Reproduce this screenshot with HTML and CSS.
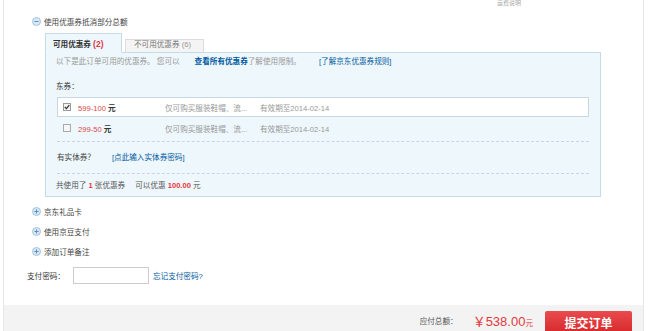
FILE: index.html
```html
<!DOCTYPE html>
<html lang="zh-CN">
<head>
  <meta charset="UTF-8" />
  <title>填写并核对订单信息</title>
  <link rel="stylesheet" href="styles.css">
</head>
<body>
  <div class="frame">
    <div class="top-note"><span>运费说明</span></div>

    <div class="order-opts">
      <div class="toggle first">
        <svg class="ico" viewBox="0 0 9 9" width="9" height="9"><circle cx="4.5" cy="4.5" r="4" fill="#d9e9f5" stroke="#a3c4df"/><path d="M2.4 4.5h4.2" stroke="#5a8fc3"/></svg>
        <span>使用优惠券抵消部分总额</span>
      </div>

      <div class="coupons">
        <div class="tabs">
          <div class="tab active">可用优惠券 <em>(2)</em></div>
          <div class="tab">不可用优惠券 <em>(6)</em></div>
        </div>
        <div class="panel">
          <p class="intro">以下是此订单可用的优惠券。 您可以<a class="strong" href="#">查看所有优惠券</a>了解使用限制。<a class="rule" href="#">[了解京东优惠券规则]</a></p>
          <h4 class="group">东券：</h4>
          <ul class="coupon-list">
            <li class="coupon selected">
              <svg class="chk" viewBox="0 0 8 8" width="8" height="8"><rect x=".5" y=".5" width="7" height="7" fill="#f3f3f3" stroke="#9a9a9a"/><path d="M1.8 4l1.6 1.6L6.3 2.2" fill="none" stroke="#333" stroke-width="1.3"/></svg>
              <span class="c-value"><b>599-100</b> 元</span>
              <span class="c-desc">仅可购买服装鞋帽、流...</span>
              <span class="c-date">有效期至2014-02-14</span>
            </li>
            <li class="coupon">
              <svg class="chk" viewBox="0 0 8 8" width="8" height="8"><rect x=".5" y=".5" width="7" height="7" fill="#f6f6f6" stroke="#aaa"/></svg>
              <span class="c-value"><b>299-50</b> 元</span>
              <span class="c-desc">仅可购买服装鞋帽、流...</span>
              <span class="c-date">有效期至2014-02-14</span>
            </li>
          </ul>
          <div class="entity">有实体券？<a href="#">[点此输入实体券密码]</a></div>
          <div class="summary">共使用了 <em>1</em> 张优惠券<span class="sp"></span>可以优惠 <em>100.00</em> 元</div>
        </div>
      </div>

      <div class="toggle">
        <svg class="ico" viewBox="0 0 9 9" width="9" height="9"><circle cx="4.5" cy="4.5" r="4" fill="#d9e9f5" stroke="#a3c4df"/><path d="M2.4 4.5h4.2M4.5 2.4v4.2" stroke="#5a8fc3"/></svg>
        <span>京东礼品卡</span>
      </div>
      <div class="toggle">
        <svg class="ico" viewBox="0 0 9 9" width="9" height="9"><circle cx="4.5" cy="4.5" r="4" fill="#d9e9f5" stroke="#a3c4df"/><path d="M2.4 4.5h4.2M4.5 2.4v4.2" stroke="#5a8fc3"/></svg>
        <span>使用京豆支付</span>
      </div>
      <div class="toggle">
        <svg class="ico" viewBox="0 0 9 9" width="9" height="9"><circle cx="4.5" cy="4.5" r="4" fill="#d9e9f5" stroke="#a3c4df"/><path d="M2.4 4.5h4.2M4.5 2.4v4.2" stroke="#5a8fc3"/></svg>
        <span>添加订单备注</span>
      </div>

      <div class="paypwd">
        <label for="pwd">支付密码：</label>
        <input id="pwd" type="password" />
        <a href="#">忘记支付密码?</a>
      </div>
    </div>

    <div class="checkout-bar">
      <span class="total-label">应付总额：</span>
      <span class="total"><b>￥538.00</b>元</span>
      <button class="submit">提交订单</button>
    </div>
  </div>
</body>
</html>
```

FILE: styles.css
```css
:root {
  --red: #e4393c;
  --blue: #005aa0;
  --line: #c6dbe9;
  --panel: #eef7fc;
}

* {
  box-sizing: border-box;
}

body {
  margin: 0;
  font-family: "Liberation Sans", "Noto Sans CJK SC", sans-serif;
  font-size: 7.6px;
  color: #333;
  background: #fff;
  overflow: hidden;
}

a {
  color: var(--blue);
  text-decoration: none;
}

em {
  font-style: normal;
}

.frame {
  margin-left: 3px;
  width: 641px;
  height: 331px;
  border-left: 1px solid #e6e6e6;
  border-right: 1px solid #e6e6e6;
  display: flex;
  flex-direction: column;
}

.top-note {
  height: 7px;
  padding-left: 493px;
  color: #aaa;
}

.top-note span {
  display: block;
  font-size: 6px;
  line-height: 7px;
}

.order-opts {
  padding: 7px 0 0 28px;
}

.toggle {
  display: flex;
  align-items: center;
  gap: 3px;
  height: 20px;
  color: #444;
}

.toggle.first {
  height: 14px;
}

.ico {
  flex-shrink: 0;
}

/* coupons */
.coupons {
  margin: 5px 0 0 13px;
  width: 556px;
}

.tabs {
  display: flex;
  align-items: flex-end;
  gap: 3px;
  height: 20px;
  margin-bottom: -1px;
  position: relative;
}

.tab {
  border: 1px solid #dcdcdc;
  border-bottom: 1px solid var(--line);
  background: #f4f4f4;
  color: #777;
  width: 79px;
  height: 14px;
  line-height: 10px;
  padding-left: 8px;
}

.tab em {
  color: #999;
}

.tab.active {
  width: 77px;
  height: 20px;
  border-color: var(--line);
  border-bottom-color: var(--panel);
  background: var(--panel);
  color: #333;
  font-weight: bold;
  line-height: 12px;
  padding: 4px 0 0 7px;
}

.tab.active em {
  color: var(--red);
  font-size: 8.5px;
}

.panel {
  border: 1px solid var(--line);
  background: var(--panel);
  padding: 3px 11px 0 10px;
}

.intro {
  margin: 0;
  line-height: 12px;
  color: #999;
}

.intro .strong {
  font-weight: bold;
  margin-left: 15px;
}

.intro .rule {
  margin-left: 18px;
}

.group {
  margin: 13px 0 0;
  line-height: 12px;
  font-size: 7.6px;
  font-weight: normal;
  color: #333;
}

.coupon-list {
  list-style: none;
  margin: 4px 0 0 1px;
  padding: 0;
}

.coupon {
  display: flex;
  align-items: center;
  height: 20px;
  margin-bottom: 1px;
  padding-left: 5px;
  border: 1px solid transparent;
}

.coupon.selected {
  background: #fff;
  border-color: #c8d7e2;
}

.chk {
  margin-right: 7px;
  flex-shrink: 0;
}

.c-value {
  width: 87px;
  font-weight: bold;
  color: #333;
}

.c-value b {
  color: #d9474a;
  font-weight: normal;
}

.c-desc {
  width: 95px;
  color: #999;
}

.c-date {
  color: #999;
}

.entity {
  margin: 3px 0 0 1px;
  padding: 10px 0 9px;
  line-height: 12px;
  border-top: 1px dashed #c9d6df;
  border-bottom: 1px dashed #c9d6df;
  color: #444;
}

.entity a {
  margin-left: 17px;
}

.summary {
  padding: 6px 0 4px;
  line-height: 12px;
  color: #555;
}

.summary em {
  font-weight: bold;
  color: var(--red);
}

.summary .sp {
  display: inline-block;
  width: 10px;
}

/* more options */
.coupons + .toggle {
  margin-top: 4px;
}

.paypwd {
  display: flex;
  align-items: center;
  height: 17px;
  margin: 6px 0 0 -5px;
}

.paypwd label {
  color: #333;
  margin-right: 8px;
}

.paypwd input {
  width: 76px;
  height: 17px;
  border: 1px solid #ccc;
  margin: 0 4px 0 0;
  padding: 0;
}

/* checkout */
.checkout-bar {
  margin-top: auto;
  height: 26px;
  flex-shrink: 0;
  overflow: hidden;
  background: #f3f3f3;
  display: flex;
  justify-content: flex-end;
  align-items: flex-start;
  padding: 6px 11px 0 0;
  line-height: 22px;
}

.total-label {
  color: #555;
}

.total {
  margin-left: 15px;
  color: var(--red);
}

.total b {
  font-weight: normal;
  font-size: 13px;
}

.submit {
  margin-left: 12px;
  width: 87px;
  height: 22px;
  border: 0;
  border-radius: 2px;
  background: linear-gradient(#ea4b4e, #d6292c);
  color: #fff;
  font-family: "Noto Sans CJK SC", sans-serif;
  font-size: 12px;
  font-weight: bold;
  padding: 0;
}
```
